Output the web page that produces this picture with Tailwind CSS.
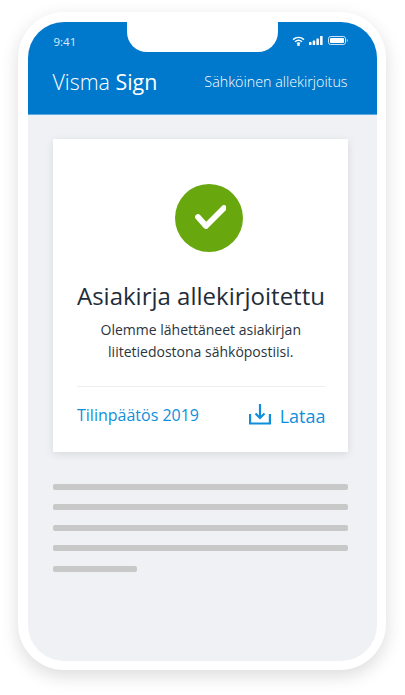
<!DOCTYPE html>
<html lang="en">

<head>
  <meta charset="UTF-8">
  <meta name="viewport" content="width=device-width, initial-scale=1.0">
  <title>Visma Sign</title>
  <script src="https://cdn.jsdelivr.net/npm/@tailwindcss/browser@4"></script>
</head>

<body class="bg-white w-[405px] h-[695px] overflow-hidden font-['Open_Sans',sans-serif]">
  <div class="pt-[12px] pl-[18px]">
    <!-- phone frame -->
    <div class="w-[368px] h-[658px] p-[9.5px] bg-white rounded-[46px] shadow-[0_6px_18px_rgba(0,0,0,0.14)]">
      <div class="relative w-[349px] h-[639px] bg-[#f0f1f5] rounded-[36px] overflow-hidden">
        <!-- notch -->
        <div class="absolute top-0 left-[99.5px] w-[151px] h-[30px] bg-white rounded-b-[20px]"></div>

        <header class="h-[93px] bg-[#0078cb] border-b border-[#5aa9e0] text-white">
          <div class="flex justify-between items-center h-[38px] pl-[26px] pr-[29px]">
            <span class="pt-[2px] text-[11.5px] text-white/85">9:41</span>
            <div class="flex items-center gap-[4px]">
              <svg class="ml-[1px]" width="13" height="10" viewBox="0 0 13 10" fill="none" stroke="white" stroke-width="1.5">
                <path d="M1 3.6C4.3.7 8.7.7 12 3.6" />
                <path d="M3 5.7c2.1-1.8 4.9-1.8 7 0" />
                <path d="M5 7.7c.9-.7 2.1-.7 3 0" />
                <circle cx="6.5" cy="8.9" r=".5" fill="white" />
              </svg>
              <svg width="14" height="9" viewBox="0 0 14 9" fill="white">
                <rect x="0" y="6" width="2.5" height="3" rx=".5" />
                <rect x="3.7" y="4.5" width="2.5" height="4.5" rx=".5" />
                <rect x="7.4" y="2.5" width="2.5" height="6.5" rx=".5" />
                <rect x="11.1" y="0" width="2.5" height="9" rx=".5" />
              </svg>
              <svg class="ml-[1px]" width="20" height="9" viewBox="0 0 20 9" fill="none">
                <rect x=".5" y=".5" width="17" height="8" rx="2.2" stroke="white" stroke-opacity=".8" />
                <rect x="2" y="2" width="14" height="5" rx="1" fill="white" />
                <path d="M18.8 3v3c.6-.2 1-.8 1-1.500s-.4-1.300-1-1.500z" fill="white" fill-opacity=".7" />
              </svg>
            </div>
          </div>
          <div class="flex justify-between items-center h-[45px] pl-[25px] pr-[29px]">
            <span class="text-[21.4px] font-light">Visma <span class="font-normal">Sign</span></span>
            <span class="text-[14.3px] font-light">Sähköinen allekirjoitus</span>
          </div>
        </header>

        <main class="pl-[25.5px] pr-[29px] pt-[24px]">
          <section class="bg-white h-[313px] pl-[24px] pr-[23px] pt-[45px] shadow-[0_2px_8px_rgba(0,0,0,0.1)]">
            <div class="flex justify-center pl-[16px]">
              <div class="flex items-center justify-center w-[68px] h-[68px] rounded-full bg-[#68a70e]">
                <svg width="34" height="26" viewBox="0 0 34 26" fill="none" stroke="white" stroke-width="5.700" stroke-linecap="round" stroke-linejoin="round">
                  <path d="M6 12 14 21 32 3" />
                </svg>
              </div>
            </div>
            <h1 class="mt-[26px] text-center text-[24px] leading-[36px] text-[#1f2d3a] whitespace-nowrap">Asiakirja allekirjoitettu</h1>
            <p class="mt-[5px] text-center text-[14px] leading-[22px] text-[#2a3540]">Olemme lähettäneet asiakirjan<br>liitetiedostona sähköpostiisi.</p>
            <div class="mt-[23px] border-t border-[#eceef1] flex justify-between items-center h-[60px]">
              <a class="text-[16px] text-[#0f8fdb] -mt-[2px]">Tilinpäätös 2019</a>
              <div class="flex items-center gap-[9px] text-[#0f8fdb]">
                <svg class="-mt-[4px]" width="22" height="21" viewBox="0 0 22 21" fill="none" stroke="#0f8fdb" stroke-width="2.200">
                  <path d="M1.100 10v9.500h19.800V10" />
                  <path d="M11 0v13.500" />
                  <path d="M6.500 9.500l4.500 4.500 4.500-4.500" />
                </svg>
                <span class="mt-[1px] mr-[-1px] text-[18px]">Lataa</span>
              </div>
            </div>
          </section>

          <div class="mt-[32px] flex flex-col gap-[14.500px]">
            <div class="h-[6px] rounded-[2px] bg-[#c8c8c8]"></div>
            <div class="h-[6px] rounded-[2px] bg-[#c8c8c8]"></div>
            <div class="h-[6px] rounded-[2px] bg-[#c8c8c8]"></div>
            <div class="h-[6px] rounded-[2px] bg-[#c8c8c8]"></div>
            <div class="h-[6px] w-[84px] rounded-[2px] bg-[#c8c8c8]"></div>
          </div>
        </main>
      </div>
    </div>
  </div>
</body>

</html>
